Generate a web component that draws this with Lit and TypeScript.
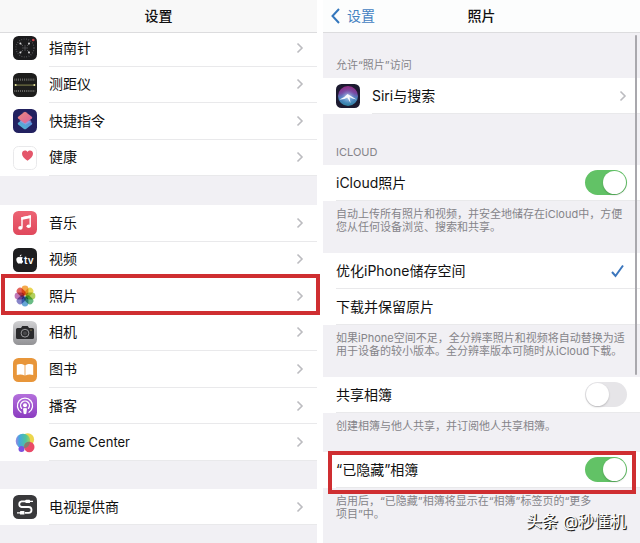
import { LitElement, html, css, svg, nothing } from "lit";
import { customElement, property } from "lit/decorators.js";

const petals = ["#f39a2c", "#e6cf35", "#a4c840", "#4eb070", "#4c98cf", "#7270c0", "#b561aa", "#e04a40"];

const icons: Record<string, unknown> = {
  compass: svg`<rect width="24" height="24" rx="5.5" fill="#1b1b1d"/>
    <circle cx="12" cy="12" r="9" fill="none" stroke="#5f5f63" stroke-width="1.2" stroke-dasharray=".8 1.6"/>
    <path d="M12 9v6M9 12h6" stroke="#55555a" stroke-width=".8"/>
    <g stroke="#6a6a6e" stroke-width=".7"><path d="M8 8l2 2M16 8l-2 2M8 16l2-2M16 16l-2-2"/></g>
    <g fill="#d5d5d8"><circle cx="7.4" cy="7.6" r="1"/><circle cx="16" cy="7.6" r="1"/><circle cx="7.4" cy="16.4" r="1"/><circle cx="16" cy="16.4" r="1"/></g>
    <circle cx="20.3" cy="4" r="1.3" fill="#c9424a"/>`,
  measure: svg`<rect width="24" height="24" rx="5.5" fill="#1d1d1c"/>
    <path d="M1.500 6.600h21M1.500 18h21" stroke="#83837f" stroke-width="2.200" stroke-dasharray=".7 1.200"/>
    <path d="M2 12.100h20" stroke="#85854e" stroke-width="1"/>
    <circle cx="2.600" cy="12.100" r="1" fill="#e8e6a0"/><circle cx="21.400" cy="12.100" r="1" fill="#e8e6a0"/>`,
  shortcuts: svg`<defs><linearGradient id="a" x1="0" y1="0" x2="1" y2="1"><stop stop-color="#eb8a7e"/><stop offset="1" stop-color="#d9609d"/></linearGradient>
    <linearGradient id="b" x1="0" y1="1" x2="1" y2="0"><stop stop-color="#4fc0d0"/><stop offset="1" stop-color="#5f81dd"/></linearGradient></defs>
    <rect width="24" height="24" rx="5.500" fill="#222160"/>
    <path d="M11 9.600Q12 9 13 9.600L18.800 13.700Q19.800 14.600 18.800 15.500L13 20Q12 20.700 11 20L5.200 15.500Q4.200 14.600 5.200 13.700Z" fill="url(#b)"/>
    <path d="M11 3.200Q12 2.500 13 3.200L18.800 7.700Q19.800 8.600 18.800 9.500L13 13.900Q12 14.600 11 13.900L5.200 9.500Q4.200 8.600 5.200 7.700Z" fill="url(#a)"/>
    <path d="M6.500 10.500L12 14.500L17 10.700L18.500 12.500L12.500 15.800L7 12.600Z" fill="#a79fdc" opacity=".7"/>`,
  health: svg`<rect x=".5" y=".5" width="23" height="23" rx="5" fill="#fff" stroke="#e9e9eb"/>
    <path d="M14.500 14.800C11 12.400 9 10.400 9 7.800 9 4.300 12.900 3.600 14.500 6 16.100 3.600 20 4.300 20 7.800 20 10.400 18 12.400 14.500 14.800Z" fill="#e4566a"/>`,
  music: svg`<defs><linearGradient id="c" x1="0" y1="0" x2="0" y2="1"><stop stop-color="#ec6474"/><stop offset="1" stop-color="#e0485c"/></linearGradient></defs>
    <rect width="24" height="24" rx="5.500" fill="url(#c)"/>
    <path d="M9 16.600V6.800L17.200 5V14.900" fill="none" stroke="#fff" stroke-width="1.400"/><path d="M8.300 6.200L17.900 4.200V7.100L8.300 9.100Z" fill="#fff"/>
    <ellipse cx="7.400" cy="16.900" rx="2.200" ry="1.800" fill="#fff"/><ellipse cx="15.700" cy="15.200" rx="2.200" ry="1.800" fill="#fff"/>`,
  tv: svg`<rect width="24" height="24" rx="5.500" fill="#1e1e20"/>
    <path d="M7 9.300C7.800 8.800 9.200 8.800 9.900 9.800 8.500 10.700 8.800 12.600 10.200 13.200 9.600 15 8.600 16 7.700 15.600 7.100 15.300 6.600 15.300 6 15.600 4.900 16.100 3.300 13.700 3.300 11.600 3.300 9.300 5.300 8.400 7 9.300ZM6.700 8.600C6.600 7.500 7.500 6.600 8.500 6.500 8.600 7.600 7.700 8.600 6.700 8.600Z" fill="#fff"/>
    <text x="11" y="15.600" class="tvtext">tv</text>`,
  photos: petals.map((c, i) => svg`<rect class="petal" x="8.600" y="1.600" width="6.800" height="9.800" rx="3.400" fill=${c} opacity=".85" transform="rotate(${i * 45} 12 12)"/>`),
  camera: svg`<defs><linearGradient id="d" x1="0" y1="0" x2="0" y2="1"><stop stop-color="#d0d0d2"/><stop offset="1" stop-color="#929295"/></linearGradient></defs>
    <rect width="24" height="24" rx="5.500" fill="url(#d)"/>
    <path d="M4.500 7H8L9.300 5H14.700L16 7H19.500Q21 7 21 8.500V16.500Q21 18 19.500 18H4.500Q3 18 3 16.500V8.500Q3 7 4.500 7Z" fill="#2a2a2c"/>
    <circle cx="12" cy="12.200" r="3.900" fill="none" stroke="#a5a5a8" stroke-width=".9"/><circle cx="12" cy="12.200" r="2" fill="#47474a"/><circle cx="18" cy="9" r=".6" fill="#d8c36a"/>`,
  books: svg`<rect width="24" height="24" rx="5.500" fill="#e8963a"/>
    <path d="M11.600 7.300C9.500 5.800 6 5.800 3.800 6.700V17C6.500 16.200 9.500 16.300 11.600 17.600ZM12.400 7.300C14.500 5.800 18 5.800 20.200 6.700V17C17.500 16.200 14.500 16.300 12.400 17.600Z" fill="#fff"/>`,
  podcasts: svg`<defs><linearGradient id="e" x1="0" y1="0" x2="0" y2="1"><stop stop-color="#b470dc"/><stop offset="1" stop-color="#8b3cc0"/></linearGradient></defs>
    <rect width="24" height="24" rx="5.500" fill="url(#e)"/>
    <g fill="none" stroke="#fff" stroke-width="1.300" stroke-linecap="round"><path d="M8 18.200A7.600 7.600 0 1 1 16 18.200"/><path d="M8.600 14.300A4.400 4.400 0 1 1 15.400 14.300"/></g>
    <circle cx="12" cy="11.300" r="2" fill="#fff"/><path d="M10 14.500Q12 13.400 14 14.500L13.400 19.500Q12 21 10.600 19.500Z" fill="#fff"/>`,
  game: svg`<defs><linearGradient id="f" x1="0" y1="0" x2="1" y2="0"><stop stop-color="#9f86e0"/><stop offset=".25" stop-color="#45a6e0"/><stop offset=".7" stop-color="#4fc59a"/><stop offset="1" stop-color="#a3d05f"/></linearGradient></defs>
    <circle cx="14.800" cy="8.500" r="6.300" fill="#ecd64c"/><circle cx="10" cy="10" r="7.300" fill="url(#f)"/>
    <circle cx="8.500" cy="18" r="3" fill="#7b52df"/><circle cx="16.300" cy="16" r="5.200" fill="#ea4a68"/>
    <path d="M11.300 14.400A5.200 5.200 0 0 1 17 10.900A7.300 7.300 0 0 1 11.300 17.200Z" fill="#877c6c"/>`,
  provider: svg`<rect width="24" height="24" rx="5.500" fill="#39393b"/>
    <path d="M13 6.300H8.600A2.900 2.900 0 0 0 8.600 12H15.600A2.900 2.900 0 0 1 15.600 17.800H12" fill="none" stroke="#fff" stroke-width="1.800"/>
    <rect x="12.500" y="4.700" width="4.500" height="3.400" rx=".6" fill="#fff"/><path d="M17 6.300H20M4 17.800H7" stroke="#fff" stroke-width="1.200"/><rect x="7" y="16.100" width="4.500" height="3.400" rx=".6" fill="#fff"/>`,
  siri: svg`<defs><linearGradient id="h" x1="0" y1="0" x2="0" y2="1"><stop stop-color="#8f2f83"/><stop offset=".35" stop-color="#7a3f9c"/><stop offset=".6" stop-color="#4e83c0"/><stop offset="1" stop-color="#2a7f9c"/></linearGradient>
    <radialGradient id="g" cx=".5" cy=".55" r=".5"><stop stop-color="#cfe8fb" stop-opacity=".9"/><stop offset=".7" stop-color="#6d9fe0" stop-opacity=".15"/><stop offset="1" stop-color="#6d9fe0" stop-opacity="0"/></radialGradient></defs>
    <rect width="24" height="24" rx="5.500" fill="#1c1a30"/><circle cx="12" cy="12" r="10" fill="url(#h)"/><circle cx="12" cy="12" r="10" fill="url(#g)"/>
    <path d="M3.500 15.500Q8 14 11.500 10Q15 12 20.500 15.500Q16 14.800 13.500 13L14.500 19L11.300 13.500Q8 16 3.500 15.500Z" fill="#fff" opacity=".92"/>`,
};

@customElement("settings-row")
export class SettingsRow extends LitElement {
  @property() icon = "";
  @property() label = "";
  @property() kind: "link" | "switch" | "choice" = "link";
  @property({ type: Boolean }) on = false;
  @property({ type: Boolean, reflect: true }) marked = false;

  static styles = css`
    :host { display: flex; position: relative; min-height: 36px; background: #fff; }
    .row { display: flex; flex: 1; align-items: center; box-sizing: border-box; padding-left: 13px; color: #111; text-decoration: none; }
    .icon { flex: none; width: 24px; height: 24px; margin-right: 12px; isolation: isolate; }
    .petal { mix-blend-mode: multiply; }
    .tvtext { font: 600 10px Inter, sans-serif; fill: #fff; }
    .body { display: flex; flex: 1; align-items: center; align-self: stretch; padding-right: 13px; border-bottom: 1px solid #e9e9eb; }
    .label { flex: 1; }
    .latin { font-size: 13px; }
    .chevron { width: 8px; height: 12px; fill: none; stroke: #bcbcc0; stroke-width: 1.6; }
    input { appearance: none; flex: none; margin: 0; }
    .switch { width: 42px; height: 25px; border-radius: 13px; background: #e6e5e8; }
    .switch::before { content: ""; display: block; width: 23px; height: 23px; margin: 1px; border-radius: 50%; background: #fff; box-shadow: 0 1px 2px #0003; }
    .switch:checked { background: #62c266; }
    .switch:checked::before { margin-left: 18px; }
    .choice { width: 0; height: 0; }
    .check { width: 13px; height: 14px; margin-right: 3px; fill: none; stroke: #3b76bd; stroke-width: 2; }
    :host([marked])::after { content: ""; position: absolute; inset: var(--mark, -3px); border: 4px solid #cf2e31; z-index: 2; pointer-events: none; }
  `;

  render() {
    const icon = this.icon ? html`<svg class="icon" viewBox="0 0 24 24" aria-hidden="true">${icons[this.icon]}</svg>` : nothing;
    const label = html`<span class="label ${/^[\w ]+$/.test(this.label) ? "latin" : ""}">${this.label}</span>`;
    if (this.kind === "link") {
      return html`<a class="row" href="#">${icon}<span class="body">${label}
        <svg class="chevron" viewBox="0 0 8 12" aria-hidden="true"><path d="M1.500 1.500L6 6L1.500 10.500"/></svg></span></a>`;
    }
    return html`<label class="row">${icon}<span class="body">${label}
      ${this.kind === "switch"
        ? html`<input class="switch" type="checkbox" role="switch" .checked=${this.on}>`
        : html`<input class="choice" type="radio" .checked=${this.on}>${this.on
            ? html`<svg class="check" viewBox="0 0 13 14" aria-hidden="true"><path d="M1 8L4.500 12L12 1.500"/></svg>` : nothing}`}
    </span></label>`;
  }
}

const tools = [["compass", "指南针"], ["measure", "测距仪"], ["shortcuts", "快捷指令"], ["health", "健康"]];
const media = [["music", "音乐"], ["tv", "视频"], ["photos", "照片"], ["camera", "相机"], ["books", "图书"], ["podcasts", "播客"], ["game", "Game Center"]];

@customElement("app-root")
export class AppRoot extends LitElement {
  static styles = css`
    :host { display: grid; grid-template-columns: 1fr 1fr; gap: 6px; min-height: 100vh; position: relative; overflow: hidden; background: #fff;
      font: 14px/20px Inter, "Noto Sans CJK SC", sans-serif; color: #111; }
    .screen { display: flex; flex-direction: column; min-width: 0; background: #f1f0f4; position: relative; }
    .bar { display: grid; grid-template-columns: 1fr auto 1fr; align-items: center; box-sizing: border-box; height: 33px; padding: 0 8px;
      background: #f8f8f8; border-bottom: 1px solid #dcdcde; position: relative; z-index: 1; }
    .photos .bar { background: #fcfdfd; }
    h1 { grid-column: 2; margin: 0; font-size: 14px; font-weight: 500; }
    .back { display: flex; align-items: center; gap: 7px; color: #4381c1; text-decoration: none; }
    .back svg { width: 9px; height: 16px; fill: none; stroke: #3477bd; stroke-width: 2; }
    .group { display: grid; grid-auto-rows: 1fr; }
    .tools { min-height: 146px; margin-top: -3px; }
    .media { min-height: 256px; margin-top: 29px; --mark: -4px -3px 0 1px; }
    .provider { margin-top: 28px; }
    .photos { --mark: -1px 4px -6px 5px; }
    h2, p { margin: 0; font-size: 11px; line-height: 13px; font-weight: 400; color: #858489; padding: 0 13px; }
    h2 { padding-top: 26px; padding-bottom: 6px; }
    .cloud { padding-top: 32px; }
    p { padding-top: 7px; padding-bottom: 19px; }
    .word { white-space: nowrap; }
    .thumb { position: absolute; top: 35px; right: 3px; width: 2px; height: 340px; border-radius: 1px; background: #a9a8ad; z-index: 1; }
    .credit { position: absolute; right: 14px; bottom: 12px; font-size: 16px; line-height: 20px; color: #fff;
      text-shadow: 1px 1px 0 #222, 1px 1px 1px #444; }
  `;

  private rows(list: string[][]) {
    return list.map(([icon, label]) => html`<settings-row icon=${icon} label=${label} ?marked=${icon === "photos"}></settings-row>`);
  }

  render() {
    return html`
      <section class="screen" lang="zh-CN">
        <header class="bar"><h1>设置</h1></header>
        <div class="group tools">${this.rows(tools)}</div>
        <div class="group media">${this.rows(media)}</div>
        <div class="group provider">${this.rows([["provider", "电视提供商"]])}</div>
      </section>
      <section class="screen photos" lang="zh-CN">
        <header class="bar"><a class="back" href="#"><svg viewBox="0 0 9 16" aria-hidden="true"><path d="M8 1L1.500 8L8 15"/></svg>设置</a><h1>照片</h1></header>
        <h2>允许“照片”访问</h2>
        <settings-row icon="siri" label="Siri与搜索"></settings-row>
        <h2 class="cloud">ICLOUD</h2>
        <settings-row kind="switch" label="iCloud照片" on></settings-row>
        <p>自动上传所有照片和视频，并安全地储存在iCloud中，方便您从任何设备浏览、搜索和共享。</p>
        <settings-row kind="choice" label="优化iPhone储存空间" on></settings-row>
        <settings-row kind="choice" label="下载并保留原片"></settings-row>
        <p>如果iPhone空间不足，全分辨率照片和视频将自动替换为适用于设备的较小版本。全分辨率版本可随时从iCloud下载。</p>
        <settings-row kind="switch" label="共享相簿"></settings-row>
        <p>创建相簿与他人共享，并订阅他人共享相簿。</p>
        <settings-row kind="switch" label="“已隐藏”相簿" on marked></settings-row>
        <p>启用后，“已隐藏”相簿将显示在“相簿”标签页的“更多<wbr><span class="word">项目”中。</span></p>
        <span class="thumb"></span>
      </section>
      <span class="credit">头条 @秒懂机</span>`;
  }
}
